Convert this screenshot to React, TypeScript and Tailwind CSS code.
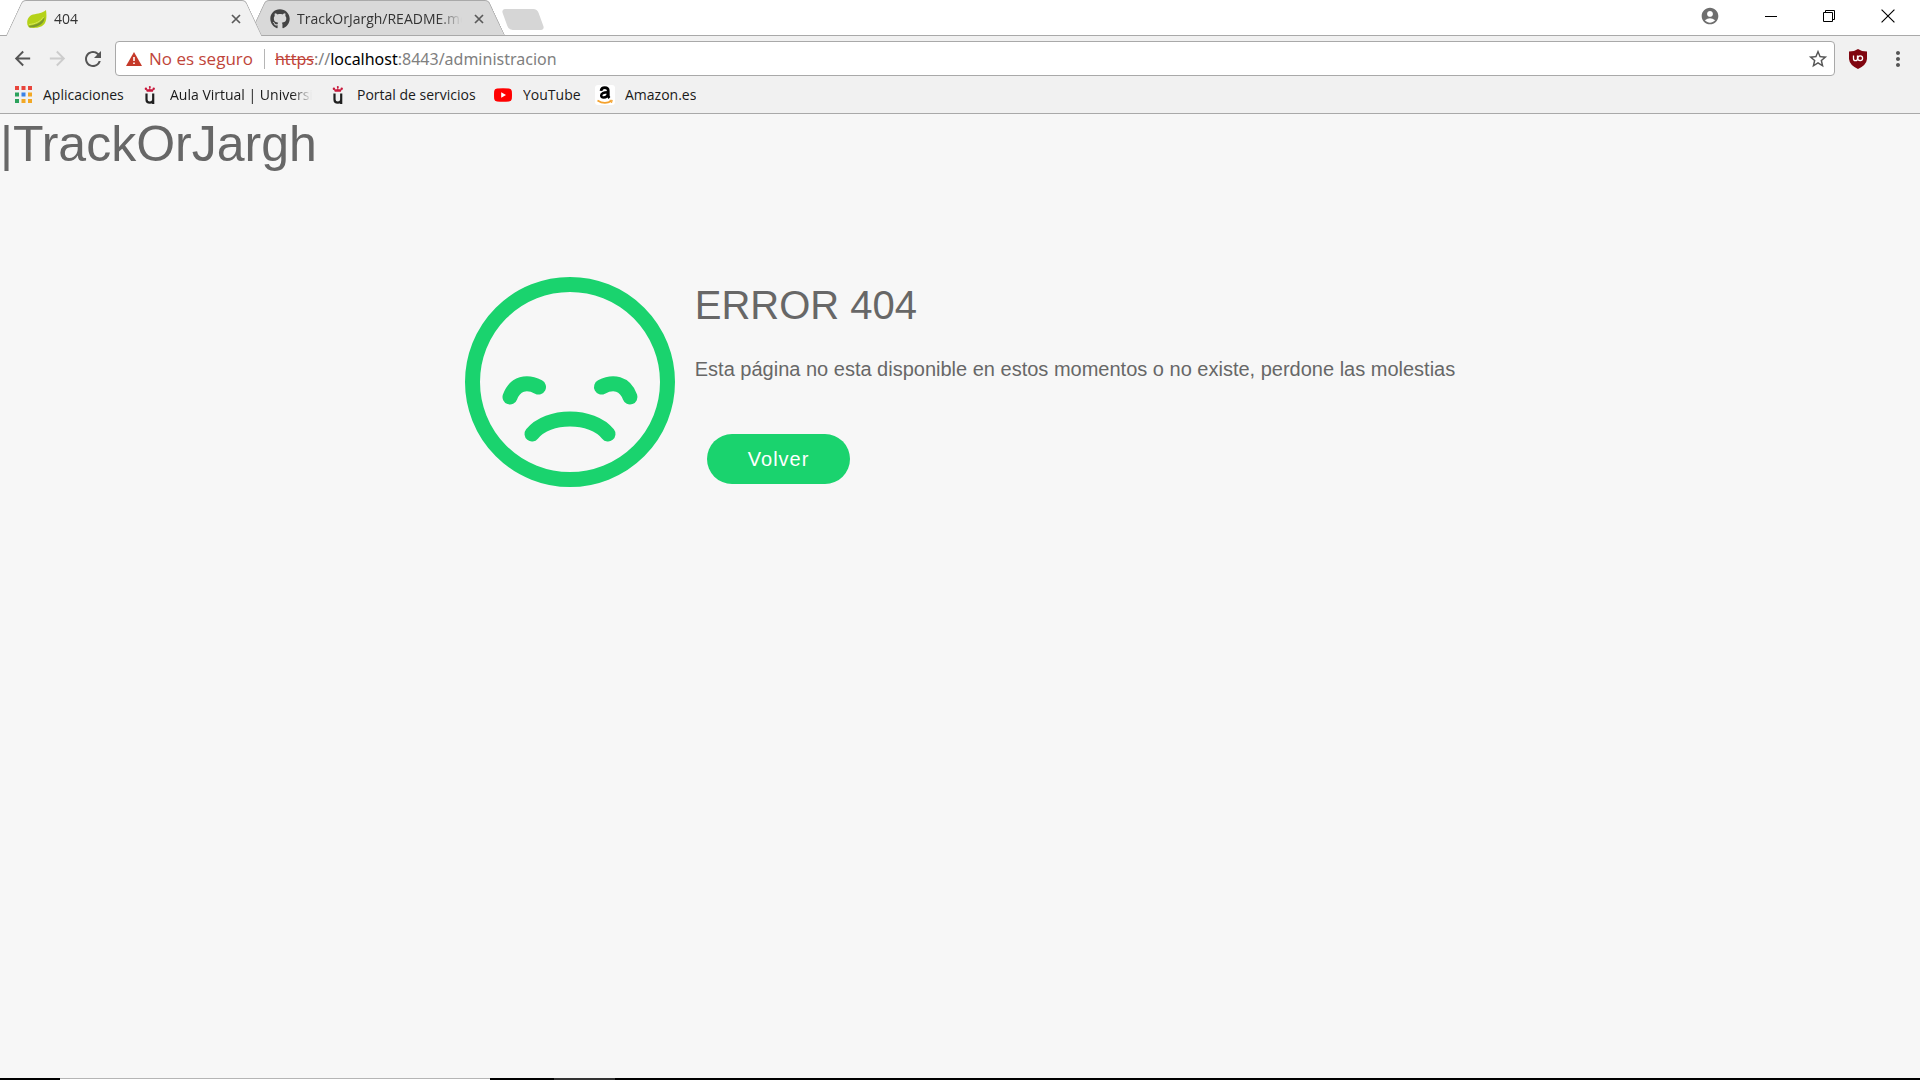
import type { ReactNode } from 'react';
import { FaGithub } from 'react-icons/fa';
import { MdAccountCircle, MdArrowBack, MdArrowForward, MdMoreVert, MdRefresh, MdStarBorder } from 'react-icons/md';

function LeafIcon() {
  return (
    <svg viewBox="0 0 20 18" className="h-[18px] w-5 shrink-0" aria-hidden="true">
      <path d="M19 0C16 3 11 3.500 6 4.500C1 6 -.5 11 .5 15L2 17.500C8 18.500 15 18 18 13C20 9 19.500 4 19 0Z" fill="#b5d218" />
      <path d="M1.500 16C8 15 14 13 17.500 7C18 13 12 17.500 3 17.500Z" fill="#7d9a2c" />
      <path d="M2 14.500C8 14 13 12 16.500 7" stroke="#d8ea58" strokeWidth="1" fill="none" />
    </svg>
  );
}

function CloseIcon() {
  return (
    <svg viewBox="0 0 10 10" className="size-[10px]" aria-hidden="true">
      <path d="M1 1L9 9M9 1L1 9" stroke="#5a5a5a" strokeWidth="1.700" />
    </svg>
  );
}

function AppsIcon() {
  const colors = ['#e8453c', '#e8453c', '#e8453c', '#2ba25c', '#3b82e6', '#f2a825', '#2ba25c', '#f2a825', '#f2a825'];
  return (
    <svg viewBox="0 0 17 17" className="size-[17px] shrink-0" aria-hidden="true">
      {colors.map((c, i) => (
        <rect key={i} x={(i % 3) * 6.5} y={Math.floor(i / 3) * 6.5} width="4" height="4" fill={c} />
      ))}
    </svg>
  );
}

function UniversityIcon() {
  return (
    <svg viewBox="0 0 12 18" className="h-[18px] w-3 shrink-0" aria-hidden="true">
      <path d="M2.500 7.500V13.500Q2.500 16.700 5.800 16.700Q9.200 16.700 9.200 13.500V7.500M9.200 13V18" stroke="#1f1f1f" strokeWidth="2.200" fill="none" />
      <path d="M1.800 3.200H9.800L8.800 5.700H2.800ZM5.300 1H6.300V4H5.300Z" fill="#c8193c" />
      <circle cx="5.800" cy="1" r="1" fill="#c8193c" />
      <circle cx="1.900" cy="2.800" r="1.200" fill="#c8193c" />
      <circle cx="9.700" cy="2.800" r="1.200" fill="#c8193c" />
    </svg>
  );
}

function YouTubeIcon() {
  return (
    <svg viewBox="0 0 18 14" className="h-[14px] w-[18px] shrink-0" aria-hidden="true">
      <path d="M3 .5Q9 0 15 .5Q17.500 .700 17.800 3Q18.200 7 17.800 11Q17.500 13.300 15 13.500Q9 14 3 13.500Q.5 13.300 .2 11Q-.2 7 .2 3Q.5 .7 3 .5Z" fill="#f00" />
      <path d="M7.200 4.300L12 7L7.200 9.700Z" fill="#fff" />
    </svg>
  );
}

function AmazonIcon() {
  return (
    <svg viewBox="0 0 20 20" className="size-5 shrink-0" aria-hidden="true">
      <rect width="20" height="20" rx="3" fill="#fff" />
      <path d="M6 5.800Q6.400 2.700 9.800 2.700Q13.300 2.700 13.300 6V10.500Q13.300 12 14.500 13" stroke="#000" strokeWidth="2.700" fill="none" />
      <path d="M13 7.300Q6.200 7.200 6.200 10.500Q6.400 12.600 8.600 12.600Q12.500 12.300 13 8.500" stroke="#000" strokeWidth="2.500" fill="none" />
      <path d="M2.500 15.500Q9.500 20 16.500 16" stroke="#f4a12c" strokeWidth="1.600" fill="none" />
      <path d="M14.500 15.300L17.300 15.300L16.500 18" stroke="#f4a12c" strokeWidth="1" fill="none" />
    </svg>
  );
}

function ShieldIcon() {
  return (
    <svg viewBox="0 0 18 20" className="h-5 w-[18px]" aria-hidden="true">
      <path d="M9 0Q12.500 2.500 18 2.500V10Q17.500 16 9 20Q.5 16 0 10V2.500Q5.500 2.500 9 0Z" fill="#800610" />
      <path d="M4.500 6.500V9.500Q4.500 11.700 6.500 11.700Q8.500 11.700 8.500 9.500V6.500" stroke="#fff" strokeWidth="1.300" fill="none" />
      <circle cx="11.200" cy="9.300" r="2.400" stroke="#fff" strokeWidth="1.300" fill="none" />
    </svg>
  );
}

function SadFace() {
  return (
    <svg viewBox="0 0 210 210" className="size-[210px] shrink-0" fill="none" stroke="#1ad36e" strokeWidth="15" strokeLinecap="round" role="img" aria-label="Cara triste">
      <circle cx="105" cy="105" r="97.500" />
      <path d="M45 120C50 106 62 104 73.500 110" />
      <path d="M165 120C160 106 148 104 136.500 110" />
      <path d="M67 157C83 137 127 137 143 157" />
    </svg>
  );
}

function Tab({ icon, title, active }: { icon: ReactNode; title: string; active?: boolean }) {
  const fill = active ? 'bg-[#f1f1f1]' : 'bg-[#d9d9d9] border-b';
  return (
    <div className={`relative flex h-9 w-[240px] items-center ${active ? 'z-10' : ''}`}>
      <span className={`absolute inset-y-0 left-0 w-1/2 origin-center -skew-x-[25deg] rounded-tl-sm border-t border-l border-[#a9a9a9] ${fill}`} />
      <span className={`absolute inset-y-0 right-0 w-1/2 origin-center skew-x-[25deg] rounded-tr-sm border-t border-r border-[#a9a9a9] ${fill}`} />
      <span className={`absolute inset-x-5 top-px bottom-0 border-[#a9a9a9] ${fill}`} />
      <button className="relative ml-[13px] flex min-w-0 flex-1 items-center gap-[7px] pt-px text-left text-[14px] text-[#333]">
        {icon}
        <span className="flex-1 overflow-hidden whitespace-nowrap [mask-image:linear-gradient(to_right,#000_85%,transparent)]">{title}</span>
      </button>
      <button aria-label="Cerrar pestaña" className="relative mr-[13px] ml-3 pt-px">
        <CloseIcon />
      </button>
    </div>
  );
}

function Bookmark({ icon, children, className = '' }: { icon: ReactNode; children: ReactNode; className?: string }) {
  return (
    <a href="#" className={`flex items-center ${className}`}>
      {icon}
      <span className="overflow-hidden whitespace-nowrap">{children}</span>
    </a>
  );
}

export default function App() {
  return (
    <div className="flex min-h-screen flex-col bg-[#f7f7f7] font-['Liberation_Sans',Arial,sans-serif]">
      <header className="border-b border-[#a9a9a9] bg-[#f1f1f1] font-['Open_Sans','Noto_Sans',sans-serif]">
        <div className="flex h-9 items-start border-b border-[#a9a9a9] bg-white">
          <div className="flex h-9 pl-[14px]">
            <Tab active icon={<LeafIcon />} title="404" />
            <div className="ml-[3px]">
              <Tab icon={<FaGithub className="size-5 shrink-0 text-[#444]" />} title="TrackOrJargh/README.md" />
            </div>
            <button aria-label="Nueva pestaña" className="mt-[9px] ml-2 h-[21px] w-9 skew-x-[20deg] rounded-sm bg-[#d6d6d6]" />
          </div>
          <div className="ml-auto flex h-8 items-center pr-[25px]">
            <button aria-label="Usuario" className="mr-[45px]">
              <MdAccountCircle className="size-5 text-[#6e6e6e]" />
            </button>
            <button aria-label="Minimizar" className="mr-[46px]">
              <svg viewBox="0 0 12 12" className="size-3"><path d="M0 6.500H12" stroke="#000" /></svg>
            </button>
            <button aria-label="Restaurar" className="mr-[46px]">
              <svg viewBox="0 0 12 12" className="size-3" fill="none" stroke="#000">
                <path d="M.5 2.500H9.500V11.500H.5ZM2.500 2.500V.5H11.500V9.500H9.500" />
              </svg>
            </button>
            <button aria-label="Cerrar">
              <svg viewBox="0 0 12 12" className="size-[14px]"><path d="M.5 .5L11.500 11.500M11.500 .5L.5 11.500" stroke="#000" /></svg>
            </button>
          </div>
        </div>
        <div className="flex items-center pt-[5px]">
          <button aria-label="Atrás" className="ml-[11px]"><MdArrowBack className="size-[23px] text-[#555]" /></button>
          <button aria-label="Adelante" className="ml-3"><MdArrowForward className="size-[23px] text-[#ccc]" /></button>
          <button aria-label="Recargar" className="mr-[10px] ml-3"><MdRefresh className="size-6 text-[#555]" /></button>
          <div className="flex h-[35px] flex-1 items-center rounded-[4px] border border-[#a9a9a9] bg-white pr-[5px] pl-[10px] text-[17px]">
            <svg viewBox="0 0 16 14" className="h-[14px] w-4 shrink-0" aria-hidden="true">
              <path d="M8 0L16 14H0Z" fill="#c53929" />
              <path d="M8 5V9M8 10.500V12" stroke="#fff" strokeWidth="1.600" />
            </svg>
            <span className="ml-[7px] text-[#c0453a]">No es seguro</span>
            <span className="mr-[10px] ml-[11px] h-5 w-px bg-[#b5b5b5]" />
            <div className="relative flex-1 font-['Noto_Sans','Open_Sans',sans-serif] text-[16px]">
              <input aria-label="Dirección" defaultValue="https://localhost:8443/administracion" className="block w-full bg-transparent text-transparent caret-black outline-none" />
              <div aria-hidden="true" className="pointer-events-none absolute inset-0 whitespace-nowrap text-[#808080]">
                <span className="text-[#c0453a] line-through">https</span>://<span className="text-black">localhost</span>:8443/administracion
              </div>
            </div>
            <button aria-label="Añadir a marcadores"><MdStarBorder className="size-[22px] text-[#555]" /></button>
          </div>
          <button aria-label="uBlock Origin" className="ml-[14px]"><ShieldIcon /></button>
          <button aria-label="Menú" className="mr-[10px] ml-[19px]"><MdMoreVert className="size-6 text-[#555]" /></button>
        </div>
        <nav aria-label="Marcadores" className="flex h-[37px] items-center pl-[15px] text-[14px] text-[#1a1a1a]">
          <Bookmark className="w-[129px] gap-[11px]" icon={<AppsIcon />}>Aplicaciones</Bookmark>
          <Bookmark className="w-[168px] gap-[14px] [mask-image:linear-gradient(to_right,#000_88%,transparent)]" icon={<UniversityIcon />}>Aula Virtual | Universidad</Bookmark>
          <Bookmark className="ml-5 w-[162px] gap-[13px]" icon={<UniversityIcon />}>Portal de servicios</Bookmark>
          <Bookmark className="w-[101px] gap-[11px]" icon={<YouTubeIcon />}>YouTube</Bookmark>
          <Bookmark className="gap-[10px]" icon={<AmazonIcon />}>Amazon.es</Bookmark>
        </nav>
      </header>

      <main className="flex-1 text-[#676767]">
        <h1 className="text-[50px] leading-[60px]">|TrackOrJargh</h1>
        <section className="mt-[103px] flex justify-center gap-5">
          <SadFace />
          <div className="flex flex-col items-start">
            <h2 className="mt-1 text-[40px] leading-[48px]">ERROR 404</h2>
            <p className="mt-7 text-[20px] leading-6">Esta página no esta disponible en estos momentos o no existe, perdone las molestias</p>
            <button className="mt-[53px] ml-3 h-[50px] rounded-full bg-[#1ad36e] px-[41px] text-[20px] tracking-wider text-white">Volver</button>
          </div>
        </section>
      </main>

      <footer className="flex h-[2px] bg-black">
        <span className="ml-[60px] w-[430px] border-t border-[#b5b5b5] bg-white" />
        <span className="ml-16 w-[61px] bg-[#333]" />
      </footer>
    </div>
  );
}
